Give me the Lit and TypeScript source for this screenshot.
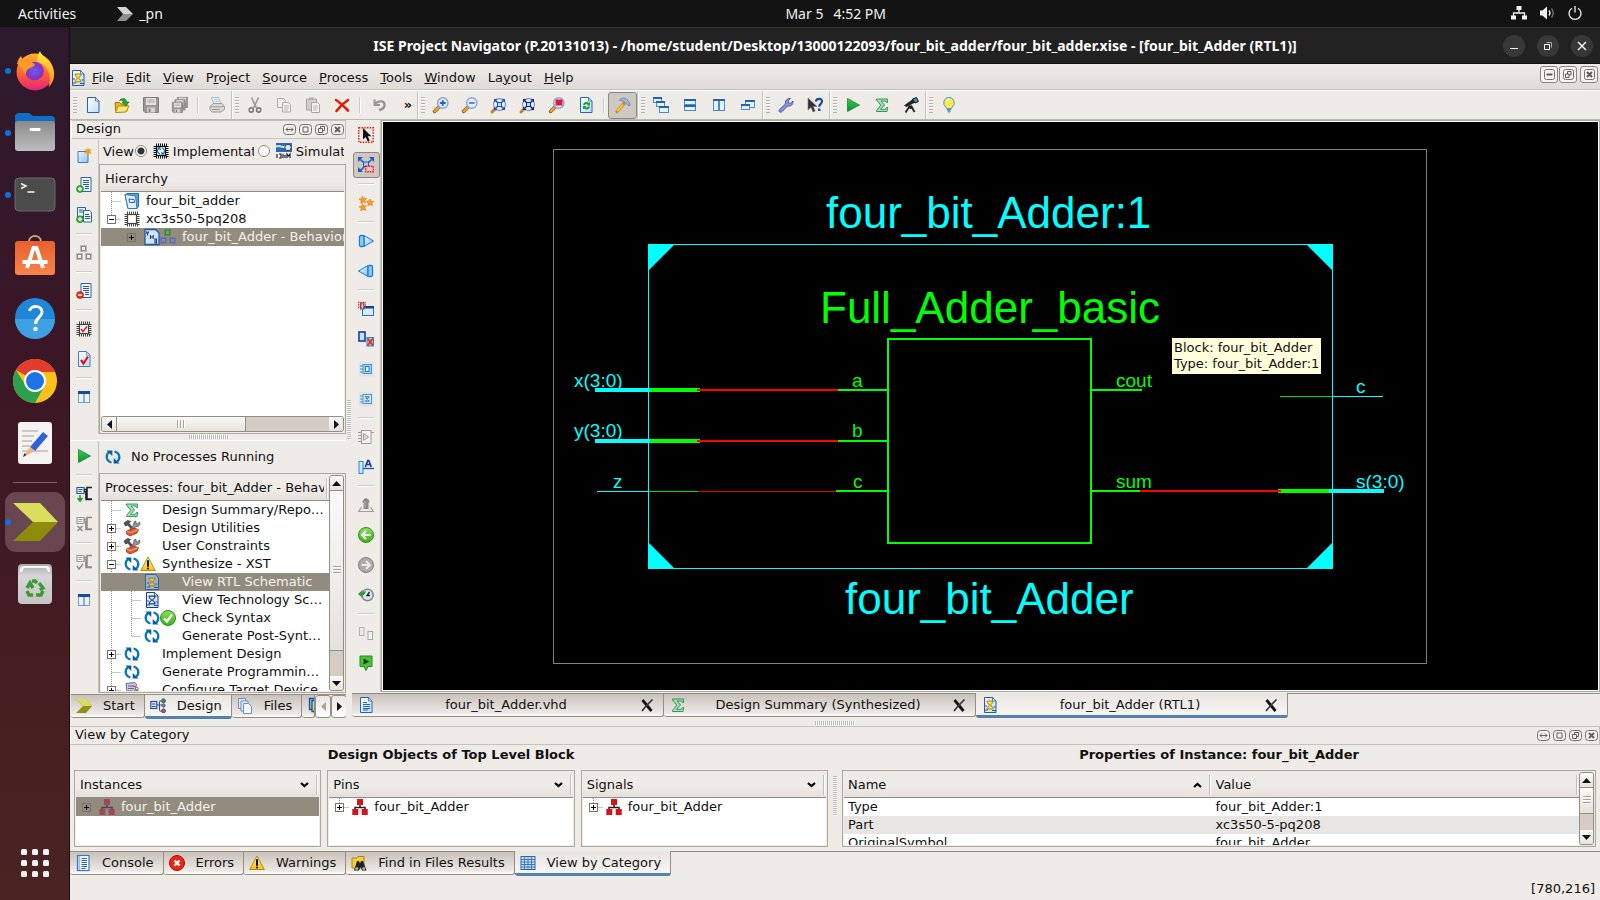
import { LitElement, html, svg, css, nothing } from "lit";
import { customElement, state } from "lit/decorators.js";
import { classMap } from "lit/directives/class-map.js";

type Entry = { icon: string; label: string; on?: boolean } | "sep";

/* Recurring shapes, parameterised where variants share an outline */
const sheet = (body: unknown, stroke = "#2a62b0") => svg`
  <path d="M2.5.5h8l3.5 3.500v11.500h-11.500z" fill="url(#paper)" stroke=${stroke}/>
  <path d="M10.500.5v3.500h3.500z" fill="#fff" stroke=${stroke} stroke-width=".8"/>${body}`;
const lens = (body: unknown) => svg`
  <path d="M1.500 14.500l5-5" stroke="#8a5a20" stroke-width="3.400" stroke-linecap="round"/>
  <path d="M1.700 14.300l4.600-4.600" stroke="#f0a830" stroke-width="2" stroke-linecap="round"/>
  <circle cx="9.800" cy="6" r="5.200" fill="#dcecfb" stroke="#8fa3d8" stroke-width="1.400"/>${body}`;
const lens4 = (c: string) => svg`
  <path d="M1 15l4-4" stroke="#c88020" stroke-width="3" stroke-linecap="round"/>
  <circle cx="8.500" cy="7.500" r="6" fill="#e6f0fc" stroke="#8d9be0" stroke-width="1.300"/>
  <path d="M4.500 3.500l8 8M12.500 3.500l-8 8" stroke=${c} stroke-width="1.500"/>
  <path d="M3 2h3.500L3 5.500zM14 2h-3.500L14 5.500zM14 13h-3.500L14 9.500zM3 13h3.500L3 9.500z" fill=${c}/>
  <rect x="6.500" y="5.500" width="4" height="4" fill="#bcd8f5" stroke=${c}/>`;
const win = (x: number, y: number, w: number, h: number) => svg`
  <rect x=${x + 0.5} y=${y + 0.5} width=${w - 1} height=${h - 1} fill="#e6f3fd" stroke="#4a8ad0"/>
  <rect x=${x} y=${y} width=${w} height="2" fill="#1f62b8"/>`;
const chipDots = (x: number, y: number, c: string) => svg`
  <rect x=${x + 0.5} y=${y + 0.5} width="6" height="6" fill="none" stroke=${c} stroke-dasharray="1 1"/>
  <rect x=${x + 1.5} y=${y + 1.5} width="4" height="4" fill="none" stroke=${c}/>`;
const trio = (a: string, b: string) => svg`${chipDots(4, 0, a)}${chipDots(0, 8, b)}${chipDots(9, 8, b)}`;
const flow = (mark: unknown, c: string) => svg`
  <path d="M1 1.500h7v6h-7zM2.500 3.500h4M2.500 5.500h3" fill="#eef4fb" stroke=${c} stroke-width="1.200"/>
  <path d="M8 3.500h3v-2h5M8 5.500h2v8h6M11 4v9h5" fill="none" stroke=${c === "#1e5aa8" ? "#222" : "#8f8b86"} stroke-width="1.600"/>
  <path d="M9 8.500h2M9 11h2" stroke=${c === "#1e5aa8" ? "#222" : "#8f8b86"}/>${mark}`;
const cycle = svg`
  <path d="M6.500 13.500C.8 12 .5 6 4 3.200" fill="none" stroke="#0a78b8" stroke-width="2.300"/>
  <path d="M1.500 1.500h5.800v5.500z" fill="#0a5fa0"/>
  <path d="M9.500 2.500C15.200 4 15.500 10 12 12.800" fill="none" stroke="#0a78b8" stroke-width="2.300"/>
  <path d="M14.500 14.500H8.700V9z" fill="#0a5fa0"/>`;
const warn = svg`
  <path d="M8 1L15.300 14.500H.7z" fill="url(#amber)" stroke="#b98a10" stroke-linejoin="round"/>
  <path d="M8 5v5" stroke="#111" stroke-width="2" stroke-linecap="round"/><circle cx="8" cy="12.500" r="1.100" fill="#111"/>`;
const sigma = svg`<path d="M2.500 2h11v3.500h-1.200L11.500 4H7l3.500 4L6.500 12.300h5l1-1.800h1.200L13 14.500H2.500v-1L6.800 8.200 2.500 3z" fill="#a8ddb8" stroke="#1e9150" stroke-width=".9"/>`;
const tools = svg`
  <path d="M0 3l3.500-2.500 3 .8-1.500 2 7.500 8.700-1.500 1.500L3.800 5 1.500 6z" fill="#555" stroke="#222" stroke-width=".6"/>
  <path d="M15.500 2l-2 1.800-1.600-.6.1-2.200-2 1.200-.3 2.800L5 11l1.500 1.500 5.500-6 2.500-.3 1.500-2z" fill="#999" stroke="#333" stroke-width=".6"/>
  <path d="M2.500 11l7-3 5 1.500-1.500 3.500-7 3-3.500-2z" fill="#e0582e" stroke="#8a2a12" stroke-width=".7"/><path d="M2.800 11.200l4 1.500 7-3" fill="none" stroke="#f8b090"/>`;
const glass = (c: string, f: string) => svg`<path d="M4.500 4h7M4.500 12h7M5 4.200c0 2.800 2.500 2.800 2.500 3.800S5 9.500 5 11.800h6c0-2.300-2.500-2.800-2.500-3.800S11 7 11 4.200z" fill=${f} stroke=${c} stroke-width="1.100"/><path d="M3 9h2M11.500 10h2M3 13h3M10 13.500h4" stroke="#1e5aa8" stroke-width="1.200"/>`;
const hier = (c: string, l: string) => svg`
  <path d="M8 5v4M3 11v-2.500h10V11" fill="none" stroke=${l} stroke-width="1.500"/>
  <rect x="5" y="0" width="6" height="6" fill=${c}/><rect x=".300" y="10" width="6" height="6" fill=${c}/><rect x="9.700" y="10" width="6" height="6" fill=${c}/>`;
const lines = (c: string) => svg`<path d="M5 5.500h4M5 7.500h7M5 9.500h7M5 11.500h7M5 13h5" stroke=${c} stroke-width="1.100"/>`;
const chip = (c: string, body: unknown) => svg`
  <rect x="3.500" y="3.500" width="9" height="9" fill="#fff" stroke=${c} stroke-width="1.200"/>
  <path d="M3 2h11M3 14h11M2 3v11M14 3v11" stroke=${c} stroke-width="3" stroke-dasharray="1 1"/>${body}`;
const page2 = (c: string, f: string) => svg`
  <path d="M1.500 1.500h6l2 2v7h-8z" fill=${f} stroke=${c}/><path d="M6.500 5.500h6l2 2v7.500h-8z" fill=${f} stroke=${c}/>
  <path d="M8 9h5M8 11h5M8 13h4" stroke=${c} stroke-width=".8"/>`;
const floppy = (x: number, y: number, s: number) => svg`<g transform=${`translate(${x} ${y}) scale(${s})`}>
  <path d="M.500.500h15v15H2l-1.500-1.500z" fill="#9c9893" stroke="#827e79"/><rect x="3" y="1" width="10" height="7" fill="#e6e3df"/>
  <path d="M4.500 3h7M4.500 5h7" stroke="#aaa6a1"/><rect x="4" y="10.500" width="8" height="5" fill="#d8d4cf"/><rect x="5.500" y="11.500" width="2" height="3.500" fill="#827e79"/></g>`;
const disc = (f: string, s: string, body: unknown) => svg`<circle cx="8" cy="8" r="7.500" fill=${f} stroke=${s}/>${body}`;
const chev = svg`<path d="M0 1h10l6 7-6 7H0l7-7z" fill="#929012"/><path d="M0 1h10l6 7H7z" fill="#dbdd58"/>`;

const icons: Record<string, unknown> = {
  newfile: sheet(nothing),
  open: svg`<path d="M1 5.500h4.500l1.500 1.500h6V14l-11 1.500z" fill="#e8b820" stroke="#a07808"/><path d="M1.500 15.500L4 9h11l-3 6z" fill="#fce878" stroke="#b48a10"/><path d="M5.500 3.500c3-3 6.500-2.500 7 1.500h2.500L11.500 9 8 5h2c-.500-2-2.500-2-4.500-1.500z" fill="#2aa838" stroke="#147820" stroke-width=".7"/>`,
  save: floppy(0, 0, 1),
  saveall: svg`${floppy(5, 0, 0.68)}${floppy(2.5, 2.5, 0.68)}${floppy(0, 5, 0.68)}`,
  print: svg`<path d="M2.500.5h7l2.500 7H5z" fill="#f4f8fe" stroke="#9fb8dc"/><path d="M5 2.500h4M5.500 4.500h4" stroke="#a9c0e6"/><path d="M1 9.500l3-3h9l2.500 3v3L12 15H3l-2-2z" fill="#dad7d3" stroke="#a09c98"/><path d="M1 9.800h11l3-.5M3 12.500h8" stroke="#a09c98" fill="none"/>`,
  cut: svg`<path d="M4.500.500L9.500 11M11.500.500L6.500 11" stroke="#9f9b97" stroke-width="1.700"/><circle cx="4.300" cy="13" r="2.100" fill="none" stroke="#7e7a76" stroke-width="1.600"/><circle cx="11.700" cy="13" r="2.100" fill="none" stroke="#7e7a76" stroke-width="1.600"/>`,
  copy: page2("#b0aca8", "#f3f1ee"),
  paste: svg`<path d="M1.500 2h10v11h-10z" fill="#d2cec9" stroke="#a8a49f"/><path d="M4 .500h5v2.500H4z" fill="#b5b1ac"/><path d="M6.500 5.500h6l2 2V15.500h-8z" fill="#f6f4f2" stroke="#a8a49f"/><path d="M8 9h5M8 11h5M8 13h4" stroke="#b9b5b0"/>`,
  del: svg`<path d="M2 3c4 2.500 8 6.500 12 10.500M14 3C9.500 6 5.500 10 2.500 14" stroke="#e81808" stroke-width="2.600" stroke-linecap="round" fill="none"/>`,
  undo: svg`<path d="M3.500 2.500V8h5.500" fill="none" stroke="#99958f" stroke-width="2"/><path d="M3.500 7.500C8 2.500 14 4 13.500 8.500 13 11.500 11 12.500 8 13" fill="none" stroke="#99958f" stroke-width="2.400"/>`,
  zin: lens(svg`<path d="M7 6h5.600M9.800 3.200v5.600" stroke="#2465b8" stroke-width="1.800"/>`),
  zout: lens(svg`<path d="M7 6h5.600" stroke="#4a80c0" stroke-width="1.800"/>`),
  zfull: lens4("#2450a8"),
  zfit: lens4("#0f2d70"),
  zred: lens(svg`<rect x="6.500" y="2.500" width="7" height="6" fill="#e01830"/>`),
  refresh: sheet(svg`<path d="M5 8a3.500 3.500 0 0 1 6-2l1-1v3.500H8.500l1.200-1.200A2 2 0 0 0 7 8zM12 9.500a3.500 3.500 0 0 1-6 2l-1 1V9h3.500l-1.200 1.200A2 2 0 0 0 10 9.500z" fill="#18a030"/>`, "#2468b0"),
  hammer: svg`<path d="M2 14.500L9 6.500" stroke="#c89010" stroke-width="3.200" stroke-linecap="round"/><path d="M2.300 14L8 7.600" stroke="#ffdc50" stroke-width="1.400"/><path d="M4.500 3C7 .500 10.500.5 12 2.500l3.500 5-1.500 1.500-4-3.500L7.500 4z" fill="#a9b2dc" stroke="#6a74a8" stroke-width=".8"/>`,
  cascade: svg`${win(0, 0, 9, 6)}${win(3, 4, 9, 6)}${win(6, 9, 10, 7)}`,
  tileh: svg`${win(2, 2, 12, 6)}${win(2, 8, 12, 6)}`,
  tilev: svg`${win(2, 2, 6, 12)}${win(8, 2, 6, 12)}`,
  restore: svg`${win(5, 3, 10, 8)}${win(1, 7, 9, 6)}`,
  wrench: svg`<path d="M1.200 14.600c-.8-1 0-1.800.8-2.600l5.500-5c-.8-3 1.500-6 5-5.500L10.200 4l.300 2 2 .300L15 4c.500 3.500-2.500 5.800-5.300 5L4.500 14.200c-.9 1-2.200 1.400-3.300.4z" fill="#8a92dc" stroke="#4c509c" stroke-width=".9"/>`,
  whats: svg`<path d="M1 1v12l3-2.800L6 15l2.200-1-2-4.500H10z" fill="#333" stroke="#777" stroke-width=".6"/><path d="M9 4.500C9 1 15 .8 15 4.500c0 2.300-2.800 2.500-2.800 5.300" fill="none" stroke="#14509c" stroke-width="2.200"/><rect x="11" y="11.500" width="2.500" height="2.500" fill="#14509c"/>`,
  play: svg`<path d="M2.500 1.500L14.500 8 2.500 14.500z" fill="url(#leaf)" stroke="#128a30" stroke-width=".8"/>`,
  sigma,
  scope: svg`<path d="M1 8.500L10 2l2 3.500L3.500 10z" fill="#222"/><path d="M9.500 2l4-1.500 2 4-3.500 1.500z" fill="#3a8ec8" stroke="#111"/><path d="M7 8.500l-4.500 7M7.500 8.500V12M8 8.500l3.500 6.500" stroke="#222" stroke-width="1.800"/>`,
  bulb: svg`<path d="M8 .3a5.500 5.500 0 0 1 3.200 9.800c-.6.600-.7 1.200-.7 1.700h-5c0-.5-.1-1.100-.7-1.700A5.500 5.500 0 0 1 8 .3z" fill="#ffe850" stroke="#4a98d0"/><path d="M5.800 3.300c.8-1 2-1 2.500-.8" stroke="#fff" stroke-width="1.400" fill="none"/><path d="M6 12.500h4M6.500 14.200h3M7.500 15.600h1" stroke="#4a88b8" stroke-width="1.300"/>`,
  addnew: svg`<path d="M2 4.500h10V15.500H2z" fill="url(#sky)" stroke="#4b79b8"/><path d="M12 0l1 2.800L16 2l-2 2.500L16 7l-3-.8L12 9l-1-2.800L8 7l2-2.500L8 2l3 .8z" fill="#f59a28"/>`,
  addsrc: svg`<path d="M5 .5h10v14H5z" fill="#f4f9ff" stroke="#2a62b0"/><path d="M7 3.500h6M7 5.500h6M7 7.500h6M9 9.500h4M9 11.500h4" stroke="#1e5aa8" stroke-width="1.200"/><circle cx="4" cy="12" r="3.500" fill="#3db03d" stroke="#1b7a1f" stroke-width=".6"/><path d="M2 12h4M4 10v4" stroke="#fff" stroke-width="1.300"/>`,
  addcopy: svg`<path d="M1.500.5h8v9h-8z" fill="#eaf3fd" stroke="#2a62b0"/><path d="M7.500 3.500h6l2 2v9.500h-8z" fill="#f4f9ff" stroke="#2a62b0"/><path d="M3 3h4M3 5h4M9 7.500h4M9 9.500h5M9 11.500h5" stroke="#1e5aa8"/><circle cx="4" cy="12.200" r="3.500" fill="#3db03d" stroke="#1b7a1f" stroke-width=".6"/><path d="M2 12.200h4M4 10.200v4" stroke="#fff" stroke-width="1.300"/>`,
  triogray: trio("#8d8a86", "#8d8a86"),
  removesrc: svg`<path d="M5 .5h10v14H5z" fill="#f4f9ff" stroke="#2a62b0"/><path d="M7 3.500h6M7 5.500h6M7 7.500h6M9 9.500h4M9 11.500h4" stroke="#1e5aa8" stroke-width="1.200"/><circle cx="4" cy="12" r="3.500" fill="#e83020" stroke="#a01810" stroke-width=".6"/><path d="M2 12h4" stroke="#fff" stroke-width="1.500"/>`,
  chipcheck: chip("#444", svg`<path d="M5 8l2 2.500L11 5.500" fill="none" stroke="#d82030" stroke-width="1.600"/>`),
  pagecheck: sheet(svg`<path d="M5 9l2.500 3.500L12 5.500" fill="none" stroke="#e01020" stroke-width="2.200"/>`, "#4b79b8"),
  panels: svg`<rect x="2.500" y="2.500" width="11" height="11" fill="#eaf3fc" stroke="#7a9cc8"/><rect x="2" y="2" width="12" height="3" fill="#154a9c"/><path d="M8 5v8.500" stroke="#5a88c4" stroke-width="1.300"/>`,
  flowrun: flow(svg`<path d="M4 9v5M1.500 12l2.500 3 2.500-3" fill="none" stroke="#16962c" stroke-width="1.500"/>`, "#1e5aa8"),
  flowstop: flow(svg`<path d="M1.500 10l5 5M6.500 10l-5 5" stroke="#8f8b86" stroke-width="1.500"/>`, "#a09c97"),
  flowok: flow(svg`<path d="M1 12l2 3 4-5" fill="none" stroke="#8f8b86" stroke-width="1.500"/>`, "#a09c97"),
  select: svg`<rect x=".800" y=".800" width="14.400" height="14.400" fill="none" stroke="#f01010" stroke-width="1.400" stroke-dasharray="1.500 1.200"/><path d="M5 1v11.500l2.700-2.500 2 4.500 2-.9-2-4.400h3.600z" fill="#111"/>`,
  expand: svg`<path d="M2.500 2.500l11 11M13.500 2.500l-11 11" stroke="#2060b8" stroke-width="1.600"/><path d="M0 0h5L0 5zM16 0h-5l5 5zM0 15h5l-5-5z" fill="#1c5cb8"/><rect x="5.500" y="5" width="5" height="4.500" fill="#a8d0f4" stroke="#2060b8"/><rect x="7.800" y="9.300" width="7.500" height="5.500" fill="#f0c8c8" stroke="#f01010" stroke-width="1.400" stroke-dasharray="1.500 1"/>`,
  stars: svg`<path d="M4.500 1l1.200 2.500 2.800-.2-1.700 2 1 2.500-2.600-.9-2.300 1.500.2-2.700L1 4.200l2.700-.6zM12 4l1 2.300 2.800.1-2 1.700.7 2.600-2.400-1.200-2.300 1.200.6-2.500-2-1.800 2.700-.3zM4.500 8.500l1.200 2.500 2.800-.2-1.700 2 1 2.500-2.600-.9-2.300 1.500.2-2.700L1 11.700l2.700-.6z" fill="#f8a028" stroke="#e07010" stroke-width=".6"/>`,
  goright: svg`<path d="M6 2.500L15.500 8 6 13.500z" fill="url(#sky)" stroke="#1a78d8"/><rect x="1.500" y="2.500" width="4.500" height="11" rx="1.500" fill="#8cd0fc" stroke="#1a78d8" stroke-width="1.300"/>`,
  goleft: svg`<path d="M10 2.500L.5 8l9.500 5.500z" fill="url(#sky)" stroke="#1a78d8"/><rect x="10" y="2.500" width="4.500" height="11" rx="1.500" fill="#8cd0fc" stroke="#1a78d8" stroke-width="1.300"/>`,
  addwin: svg`<rect x="4.500" y="5.500" width="11" height="9" fill="#d8edfc" stroke="#3a70b8"/><rect x="4" y="5" width="12" height="2.500" fill="#183f90"/><rect x="2.500" y="2" width="3.500" height="6" fill="#bde0fa" stroke="#1e5aa8"/><path d="M0 1.500h8M0 4h8M0 6.500h8" stroke="#f03018" stroke-width="1.400" stroke-dasharray="1.400 1"/>`,
  delwin: svg`<rect x="1" y="1" width="6" height="9" fill="#bfe4fb" stroke="#153f94" stroke-width="1.600"/><rect x="9" y="6.500" width="6.500" height="8.500" fill="#9cc4ec" stroke="#3a80c8"/><path d="M9.500 7.500l5.500 7M15 7.500l-5.500 7" stroke="#f03010" stroke-width="1.800"/>`,
  push: svg`<rect x="1" y="1" width="14.500" height="14.500" fill="#dfe3e6"/><path d="M2 5h4M2 8h4M2 11h4" stroke="#4f90c8" stroke-width="1.200"/><rect x="5" y="3.500" width="8.500" height="9" fill="#9fd0ee" stroke="#4a9ad0"/><rect x="7.500" y="5.500" width="3.500" height="5" fill="#e4f4fc" stroke="#2a80c0"/>`,
  pop: svg`<rect x="1" y="1" width="14.500" height="14.500" fill="#dfe3e6"/><path d="M2 5h4M2 8h4M2 11h4" stroke="#4f90c8" stroke-width="1.200"/><rect x="5" y="3.500" width="8.500" height="9" fill="#cfe8f6" stroke="#4a9ad0"/><path d="M7.500 6l3.500 4M11 6l-3.500 4M7 5.800h4.500M7 10.200h4.500" stroke="#4a78b0" stroke-width="1.100"/>`,
  gate: svg`<path d="M0 3.500h4M0 6.500h4M0 9.500h4M0 12.500h4M13 3.500h3" stroke="#a09c97" stroke-width="1.200"/><rect x="3.500" y="1.500" width="9.500" height="13" fill="#f5f3f0" stroke="#a09c97"/><path d="M5.500 4.500v7l5-3.500z" fill="#e0ddd9" stroke="#a09c97"/>`,
  label: svg`<rect x="1" y="2.500" width="4" height="12" fill="#c8e8fc" stroke="#2a88d8"/><path d="M5 9.500h11" stroke="#1a60b8" stroke-width="1.400"/><path d="M7.300 8l2.500-6.500h1L13.300 8M8.500 5.500h4" fill="none" stroke="#1c3f94" stroke-width="1.700"/>`,
  up: svg`<path d="M3.500 10L.8 14.500h14.400L12.500 10" fill="none" stroke="#a09c97" stroke-width="1.200"/><path d="M8 1c3 1 3.500 3 3.500 4.500H10.500V12h-5V5.500h-1C4.500 4 5 2 8 1z" fill="#8b8783"/><path d="M7 4v7" stroke="#b9b5b0"/>`,
  back: disc("url(#green)", "#2d9016", svg`<path d="M12.500 8H4M8 4L4 8l4 4" fill="none" stroke="#fff" stroke-width="2"/>`),
  fwd: disc("#aeaaa6", "#84807c", svg`<path d="M3.500 8H12M8 4l4 4-4 4" fill="none" stroke="#efedea" stroke-width="1.800"/>`),
  hist: svg`<circle cx="9.500" cy="8" r="5.700" fill="#d9e6ec" stroke="#7f8a8c" stroke-width="1.600"/><path d="M11.500 5L9 8.500h3" stroke="#223" stroke-width="1.300" fill="none"/><path d="M0 7l4.500-4v2.500C6 5 7 4.500 8 3.500 7.500 6.500 6.500 8 4.500 8.500V11z" fill="#2e9a38"/>`,
  two: svg`<rect x="1.500" y="2.500" width="4.500" height="8" fill="#eceae7" stroke="#b5b1ac"/><rect x="10" y="6.500" width="4.500" height="8" fill="#f4f2f0" stroke="#aaa6a1"/>`,
  runflag: svg`<path d="M2 1h12v10.500h-4L8 15.500 6 11.500H2z" fill="#4cc03a" stroke="#248a18"/><path d="M5.500 3.500L11.500 6.500 5.500 9.500z" fill="#154010"/>`,
  proj: svg`<path d="M1 1.500l3-1h10.500v13L13 15.500H4z" fill="#5aa4dc" stroke="#1c6cb8"/><path d="M1 1.500L11.500 3 13 15.500H4z" fill="#e2f1fc" stroke="#2c7cc4"/><path d="M5 6l5 .5.5 3-5-.2z" fill="#fff" stroke="#2458a8"/>`,
  chip: chip("#444", nothing),
  impl: chip("#111", svg`<g transform="translate(3.500 3.500) scale(.56)">${cycle}</g>`),
  simul: svg`<rect width="16" height="9" fill="#2a6ab0"/><path d="M0 4c3-3 6 2 10-1" stroke="#cfe6fa" stroke-width="2" fill="none"/><circle cx="12" cy="4.500" r="3.200" fill="#dfe8f0" stroke="#345"/><path d="M0 10h16v6H0z" fill="#eee"/><path d="M1 11v4M3 11h2v4H3M7 15v-4M9 15v-3M11 15v-4l1.500 2 1.500-2v4" stroke="#222" stroke-width="1.200" fill="none"/>`,
  vhd: svg`<path d="M1 .5h10.500L15 4v11.500H1z" fill="#cfe4f8" stroke="#1f58a8" stroke-width="1.300"/><path d="M2.500 2.500l1 3 1-3M6.500 6v4M9.300 6v4M6.500 8h2.800M11 10v4h1.500v-4z" fill="none" stroke="#223a70" stroke-width="1.100"/>`,
  trio: trio("#1c9838", "#5a6cc0"),
  cycle, warn, tools,
  ok: disc("url(#green)", "#2a9018", svg`<path d="M4 8.500l3 3L12 4.500" fill="none" stroke="#fff" stroke-width="2.200"/>`),
  rtl: sheet(glass("#b8941c", "#ffe070"), "#1f5cb0"),
  rtlsel: svg`<path d="M1.500.5h10l3 3.500v11.500h-13z" fill="#9fb3c4" stroke="#35609c"/>${glass("#a5893a", "#dcc878")}`,
  tech: sheet(glass("#173a88", "#dfeaf8"), "#173f90"),
  config: svg`<path d="M2 1.500l9-1 1.500 2L10 12 3.500 14z" fill="#c4cae0" stroke="#666c90"/><path d="M4 4h6M4 6.500h6M4 9h5" stroke="#667"/><path d="M12.500 15V9M10 11.500l2.500-3 2.500 3" fill="none" stroke="#189030" stroke-width="1.800"/><path d="M9 4l5 2v3" stroke="#d83080" fill="none"/>`,
  start: chev,
  design: svg`<rect x=".8" y="3.500" width="6" height="7" fill="#dceafa" stroke="#254f9c" stroke-width="1.200"/><path d="M2 6h3.500M2 8.500h3.500M7 7h5M9.500 3.500v9M9.500 3h3M9.500 13h3" stroke="#254f9c" fill="none"/><circle cx="13.500" cy="2.800" r="1.900" fill="#38a048" stroke="#446"/><circle cx="13.500" cy="7.500" r="1.600" fill="#7a88cc" stroke="#446"/><circle cx="13.500" cy="12.800" r="1.900" fill="#d85070" stroke="#446"/>`,
  files: svg`<path d="M1.500.5h7v10h-7z" fill="#dfeaf8" stroke="#6a8cc0"/><path d="M4 3h7v10H4z" fill="#e8f1fb" stroke="#6a8cc0"/><path d="M6.500 5.500h5l3 3v7h-8z" fill="#f4f9ff" stroke="#6a8cc0"/>`,
  libs: svg`<path d="M2.500.5h9v11h-9z" fill="#8cc4f0" stroke="#154f98" stroke-width="1.300"/><path d="M5 2.500h9v11h-9z" fill="#ffe070" stroke="#154f98" stroke-width="1.300"/><path d="M7.500 4.500h8v11h-8z" fill="#60a8e8" stroke="#154f98" stroke-width="1.300"/>`,
  doc: sheet(lines("#1e66c0")),
  console: svg`<rect x="2.500" y=".5" width="11.500" height="15" fill="#fff" stroke="#3a78c0" stroke-width="1.200"/><path d="M4.300 1v14" stroke="#9cc4ea" stroke-width="2"/><path d="M6.500 3.500h5.500M6.500 5.500h5.500M6.500 7.500h5.500M6.500 9.500h5.500M6.500 11.500h5.500M6.500 13.500h4" stroke="#2464b4" stroke-width="1.100"/>`,
  err: disc("#ee2414", "#a81008", svg`<path d="M5.500 5.500l5 5M10.500 5.500l-5 5" stroke="#fff" stroke-width="2.400"/>`),
  find: svg`<path d="M1 3h5l1-1.500h6V13H1z" fill="#f4d040" stroke="#a88410"/><path d="M3 15.500l3-9.500h2l1 2.500L10 6h2l3.500 9.500H11L9.500 12 8 15.500z" fill="#222"/><circle cx="5.800" cy="13.500" r="1.600" fill="#aaa"/><circle cx="12.700" cy="13.500" r="1.600" fill="#aaa"/>`,
  grid: svg`<rect x="1" y="1.500" width="14" height="13" fill="#cfe2f8" stroke="#2a64b0"/><path d="M1 4.500h14M1 7h14M1 9.500h14M1 12h14M4.500 1.500v13M8 1.500v13M11.500 1.500v13" stroke="#3a74c0"/>`,
  hier: hier("#dc1018", "#222"),
  hiersel: hier("#a04858", "#44484c"),
};

const dockIcons: Record<string, unknown> = {
  firefox: svg`<circle cx="20" cy="21" r="18.500" fill="url(#fox)"/><path d="M25 0c1 5 10 8 13.500 18 2 8-1 15-5 18C38 24 31 12 22 11c0-4 1-8 3-11z" fill="url(#foxy)"/><circle cx="19.500" cy="20" r="9.300" fill="url(#foxp)"/><path d="M2 13C3 9 4 7 6 5c1 3 3 4 6 4.500 3 .3 5 2.500 8 3.500-1 3-4 3.500-6 4.500-2.500 1-3 4-3.500 6C7 20 7 15 2 13z" fill="#ff9a28"/>`,
  files: svg`<path d="M0 4q0-4 4-4h10l4 3h18q4 0 4 4v20H0z" fill="#0f6fc8"/><rect x="0" y="8" width="40" height="30" rx="3" fill="url(#steel)"/><rect x="14.500" y="15" width="11" height="3" rx="1" fill="#fff"/>`,
  term: svg`<rect x="0" y="3" width="40" height="33" rx="4" fill="#4b4c4b" stroke="#6b6b6b"/><path d="M6 8.500l5 2.500-5 2.500" fill="none" stroke="#eee" stroke-width="1.600"/><path d="M12.500 17h7" stroke="#eee" stroke-width="1.600"/>`,
  store: svg`<path d="M14 5c0-8 12-8 12 0" fill="none" stroke="#c9a088" stroke-width="2"/><rect y="4" width="40" height="34" rx="3" fill="url(#orange)"/><path d="M12 31L18.500 11h3L28 31" fill="none" stroke="#fff" stroke-width="4"/><path d="M7.500 25h25" stroke="#fff" stroke-width="4"/>`,
  help: svg`<circle cx="20" cy="19" r="20" fill="#1f86d8"/><path d="M0 20a20 20 0 0 0 40 0z" fill="#3fa0e4"/><path d="M14.500 12c1-6 13-6 12.500 1 0 5-6.500 6-6.500 12" fill="none" stroke="#fff" stroke-width="3"/><circle cx="20.500" cy="30" r="2.200" fill="#fff"/>`,
  chrome: svg`<circle cx="20" cy="20" r="22" fill="#fcc21b"/><path d="M20 20L1 9A22 22 0 0 1 39 9H20z" fill="#e33b2e"/><path d="M1 9A22 22 0 0 0 20 42l9.500-17L11 25z" fill="#2da04e"/><path d="M20 9h19.500v2H20z" fill="#e33b2e"/><circle cx="20" cy="20" r="11" fill="#fff"/><circle cx="20" cy="20" r="9" fill="#1f73e8"/>`,
  gedit: svg`<rect x="3" y="-1" width="34" height="42" rx="3" fill="#f4f3f1"/><path d="M7 8h16M7 13h12M7 18h10M7 23h8M7 28h26" stroke="#c2bcae" stroke-width="1.500"/><path d="M15 24L28 9l5 4-13 15z" fill="#2f62d8"/><path d="M15 24l5 4-12 6z" fill="#f0b47c"/><path d="M8 34l1.500-4 2 2z" fill="#333"/>`,
  ise: svg`<path d="M-2 1h27l18 19H18z" fill="#dbdd5c"/><path d="M-2 39h27l18-19H18z" fill="#8e8c08"/>`,
  trash: svg`<rect x="3" y="0" width="34" height="40" rx="4" fill="url(#bin)"/><path d="M5 6q0-4 3-4h24q3 0 3 4v2h-2L31 4H9L7 8H5z" fill="#f6f6f6"/><path d="M12 24l3-5 3 5M22 19l-2-2h-3M24 19l4 5-3 2M28 27l-2 4h-5M18 31h-4l-2-4" fill="none" stroke="#3a9a34" stroke-width="3.500"/>`,
  apps: svg`${[6, 17, 28].map((y) => [6, 17, 28].map((x) => svg`<rect x=${x} y=${y} width="6" height="6" rx="1.500" fill="#f4f2f2"/>`))}`,
};

const pic = (name: string) => html`<svg class="ic" viewBox="0 0 16 16" aria-hidden="true">${icons[name]}</svg>`;

const b = (icon: string, label: string, on = false): Entry => ({ icon, label, on });
const mainBar: { items: Entry[]; more?: boolean }[] = [
  { items: [b("newfile", "New"), b("open", "Open"), b("save", "Save"), b("saveall", "Save All"), "sep", b("print", "Print")] },
  { items: [b("cut", "Cut"), b("copy", "Copy"), b("paste", "Paste"), b("del", "Delete"), "sep", b("undo", "Undo")], more: true },
  { items: [b("zin", "Zoom In"), b("zout", "Zoom Out"), b("zfull", "Zoom to Full View"), b("zfit", "Zoom to Selected"), b("zred", "Zoom to Box"), b("refresh", "Refresh"), "sep", b("hammer", "Toggle Tools", true)] },
  { items: [b("cascade", "Cascade"), b("tileh", "Tile Horizontally"), b("tilev", "Tile Vertically"), b("restore", "Float")] },
  { items: [b("wrench", "Preferences"), b("whats", "What's This")] },
  { items: [b("play", "Implement Top Module"), b("sigma", "Design Summary"), b("scope", "Analyze Design")] },
  { items: [b("bulb", "Tip of the Day")] },
];
const designBar: Entry[] = [b("addnew", "New Source"), b("addsrc", "Add Source"), b("addcopy", "Add Copy of Source"), "sep", b("triogray", "Manual Compile Order"), "sep", b("removesrc", "Remove"), "sep", b("chipcheck", "Design Properties"), b("pagecheck", "Check"), "sep", b("panels", "Split View")];
const processBar: Entry[] = [b("play", "Run"), "sep", b("flowrun", "Rerun All"), b("flowstop", "Stop"), "sep", b("flowok", "Force Up-to-Date"), "sep", b("panels", "Split View")];
const schematicBar: Entry[] = [b("select", "Select"), b("expand", "Select Area", true), "sep", b("stars", "Highlight"), "sep", b("goright", "Trace Forward"), b("goleft", "Trace Back"), "sep", b("addwin", "Add to View"), b("delwin", "Remove from View"), b("push", "Push"), b("pop", "Pop"), "sep", b("gate", "Show Gate"), b("label", "Rename"), "sep", b("up", "Up"), b("back", "Back"), b("fwd", "Forward"), b("hist", "History"), "sep", b("two", "Compare"), b("runflag", "Run")];

const menus: [string, string, string][] = [["", "F", "ile"], ["", "E", "dit"], ["", "V", "iew"], ["P", "r", "oject"], ["", "S", "ource"], ["", "P", "rocess"], ["", "T", "ools"], ["", "W", "indow"], ["La", "y", "out"], ["", "H", "elp"]];

type Node = { text: string; icons: string[]; level: number; box?: "+" | "-"; selected?: boolean };
const sources: Node[] = [
  { text: "four_bit_adder", icons: ["proj"], level: 0 },
  { text: "xc3s50-5pq208", icons: ["chip"], level: 0, box: "-" },
  { text: "four_bit_Adder - Behavioral", icons: ["vhd", "trio"], level: 1, box: "+", selected: true },
];
const processes: Node[] = [
  { text: "Design Summary/Repo…", icons: ["sigma"], level: 0 },
  { text: "Design Utilities", icons: ["tools"], level: 0, box: "+" },
  { text: "User Constraints", icons: ["tools"], level: 0, box: "+" },
  { text: "Synthesize - XST", icons: ["cycle", "warn"], level: 0, box: "-" },
  { text: "View RTL Schematic", icons: ["rtlsel"], level: 1, selected: true },
  { text: "View Technology Sc…", icons: ["tech"], level: 1 },
  { text: "Check Syntax", icons: ["cycle", "ok"], level: 1 },
  { text: "Generate Post-Synt…", icons: ["cycle"], level: 1 },
  { text: "Implement Design", icons: ["cycle"], level: 0, box: "+" },
  { text: "Generate Programmin…", icons: ["cycle"], level: 0 },
  { text: "Configure Target Device", icons: ["config"], level: 0, box: "+" },
];

@customElement("app-root")
export class AppRoot extends LitElement {
  @state() private bottomTab = "View by Category";

  static styles = css`
    :host { display: grid; grid-template-rows: 27px minmax(0, 1fr); grid-template-columns: 70px minmax(0, 1fr); height: 100vh; min-height: 720px; background: #efebe7; color: #111; font: 13px/18px "DejaVu Sans", sans-serif; overflow: hidden; }
    * { box-sizing: border-box; }
    button { font: inherit; color: inherit; background: none; border: 0; padding: 0; margin: 0; }
    .defs { position: absolute; width: 0; height: 0; }
    .ic { width: 16px; height: 16px; flex: none; display: block; overflow: visible; }
    .topbar { grid-column: 1 / 3; background: #131313; color: #f0f0f0; display: grid; grid-template-columns: minmax(0, 1fr) auto calc(50% - 86px); align-items: center; font: 14px/26px "Noto Sans", sans-serif; }
    .top-left { display: flex; align-items: center; padding-left: 18px; gap: 41px; }
    .top-app { display: flex; align-items: center; gap: 6px; }
    .top-icons { display: flex; justify-content: flex-end; align-items: center; gap: 12px; padding-right: 17px; }
    .clock { display: flex; gap: 10px; }
    .dock { background: linear-gradient(#2c1a2d, #3a1626 35%, #451e21 75%, #4a2423); border-right: 1px solid #1a0e14; padding-top: 13px; display: flex; flex-direction: column; align-items: center; }
    .dock-item { width: 60px; height: 60px; margin: 1px 0; flex: none; position: relative; display: grid; place-items: center; border-radius: 11px; }
    .dock-item svg { width: 40px; height: 40px; overflow: visible; display: block; }
    .dock-item.current { background: #6a4651; }
    .running::before { content: ""; position: absolute; left: 0; top: 27px; width: 6px; height: 6px; border-radius: 50%; background: #0b74dc; }
    .dock-line { width: 44px; height: 17px; display: flex; align-items: center; flex: none; }
    .dock-line::before { content: ""; flex: 1; height: 1px; background: #80606a; }
    .dock-apps { margin-top: auto; margin-bottom: 7px; }
    .window { display: flex; flex-direction: column; min-width: 0; min-height: 0; }
    .titlebar { height: 37px; flex: none; background: #222; border-top: 1px solid #333; border-bottom: 1px solid #111; color: #fff; display: grid; grid-template-columns: 110px minmax(0, 1fr) 110px; align-items: center; font: bold 14px/34px "Noto Sans", sans-serif; }
    .titlebar h1 { font: inherit; margin: 0; grid-column: 2; text-align: center; white-space: nowrap; }
    .win-btns { display: flex; gap: 12px; justify-content: flex-end; padding-right: 7px; }
    .win-btns button { width: 22px; height: 22px; border-radius: 50%; background: #383838; display: grid; place-items: center; }
    .win-btns svg { width: 12px; height: 12px; }
    .menubar { height: 26px; flex: none; display: flex; align-items: center; background: linear-gradient(#efece8, #dfdbd7); border-bottom: 1px solid #c6c1bb; padding-top: 2px; }
    .menubar > button { padding: 0 6px; }
    .mdi { margin-left: auto; display: flex; gap: 1px; align-self: flex-start; padding-right: 2px; }
    .mdi button { width: 18px; height: 17px; border: 1px solid #8d867e; border-radius: 3px; background: #f6f4f2; display: grid; place-items: center; }
    .mdi button:last-child { margin-left: 2px; }
    .mdi svg, .tiny svg { width: 13px; height: 13px; display: block; }
    .toolbar { height: 30px; flex: none; display: flex; border-top: 1px solid #fff; border-bottom: 1px solid #bbb6b0; }
    .group { display: flex; align-items: center; border-right: 1px solid #c6c1bb; box-shadow: 1px 0 #fff; padding-left: 3px; }
    .group:last-child { border: 0; box-shadow: none; }
    .grip { width: 4px; height: 16px; margin-right: 1px; background: repeating-linear-gradient(#b7b2ac 0 1px, #fbfaf9 1px 2px, #efebe7 2px 3px); }
    .tool { display: grid; place-items: center; width: 29px; height: 27px; border: 1px solid transparent; border-radius: 3px; flex: none; }
    .tool.on { background: #cec8c2; border-color: #8c867f; }
    .sep { width: 8px; height: 16px; display: flex; justify-content: center; flex: none; }
    .sep::before { content: ""; border-left: 1px solid #d0cbc6; border-right: 1px solid #fff; }
    .more { font-weight: bold; width: 18px; margin-left: 6px; text-align: center; }
    .vbar { display: flex; flex-direction: column; align-items: center; overflow: hidden; border-right: 1px solid #c6c1bb; }
    .left .vbar { padding-right: 2px; }
    .left .vbar .tool { width: 25px; }
    .vbar .tool { width: 27px; height: 26px; margin: 2px 0; }
    .vbar .sep { width: 16px; height: 8px; flex-direction: column; }
    .vbar .sep::before { border: 0; border-top: 1px solid #d0cbc6; border-bottom: 1px solid #fff; }
    .main { flex: 1; min-height: 0; display: grid; grid-template-columns: 276px 6px minmax(0, 1fr); }
    .left { display: flex; flex-direction: column; min-height: 0; min-width: 0; padding-left: 1px; }
    .panel-title { height: 19px; flex: none; display: flex; align-items: center; justify-content: space-between; border: 1px solid #c6c1bb; border-left-color: #fff; padding: 0 1px 0 4px; }
    .panel-title h2 { font: inherit; line-height: 15px; height: 17px; margin: 0; }
    .tiny { display: flex; gap: 3px; }
    .pane { display: grid; grid-template-columns: 28px minmax(0, 1fr); min-height: 0; }
    .pane.upper { flex: 7 1 0; margin-top: 1px; }
    .pane.lower { flex: 6 1 0; border-top: 1px solid #fff; }
    .pane-body { display: flex; flex-direction: column; min-height: 0; min-width: 0; }
    .view-row { height: 24px; flex: none; display: flex; align-items: center; padding: 0 2px 2px 4px; line-height: 17px; white-space: nowrap; overflow: hidden; }
    .view-row fieldset { display: contents; }
    .view-row label { display: flex; gap: 4px; align-items: center; min-width: 0; overflow: hidden; }
    .view-row label .ic { margin-left: 2px; }
    .impl { width: 120px; padding-left: 1px; flex: none; }
    .simu { flex: 1; margin-left: 4px; }
    input[type="radio"] { appearance: none; width: 12px; height: 12px; margin: 0; border: 1px solid #8d867e; border-radius: 50%; background: #fff; flex: none; }
    input[type="radio"]:checked { background: radial-gradient(#333 0 3px, #fff 4px); }
    .frame { border: 1px solid #aca7a0; padding: 1px; background: #efebe7; min-height: 0; flex: 1; display: flex; }
    .frame-col { flex: 1; min-width: 0; display: flex; flex-direction: column; }
    .head { height: 26px; flex: none; display: flex; align-items: center; justify-content: space-between; padding: 0 1px 0 4px; background: linear-gradient(#efebe7 60%, #e4dfda); border-bottom: 1px solid #958d83; white-space: nowrap; overflow: hidden; text-align: left; width: 100%; }
    .head::after { content: ""; height: 20px; border-left: 1px solid #c4beb7; border-right: 1px solid #fff; margin-left: 7px; }
    .head.tight::after { margin-left: 2px; }
    .head.plain::after { display: none; }
    .head span { overflow: hidden; flex: 1; }
    .head svg { width: 9px; height: 6px; flex: none; }
    .tree { flex: 1; min-height: 0; overflow: hidden; background: #fff; margin: 0; padding: 0; list-style: none; }
    .tree li { display: flex; height: 18px; align-items: center; white-space: nowrap; overflow: hidden; }
    .tree li.selected { background: #928c7e; color: #f4f2ee; }
    .lane { width: 20px; height: 18px; flex: none; position: relative; }
    .lane svg { display: block; width: 20px; height: 18px; }
    .icons { display: flex; flex: none; height: 16px; width: 22px; margin-left: 3px; }
    .icons.wide { width: 38px; }
    .hscroll { height: 16px; flex: none; display: flex; border: 1px solid #958d83; border-radius: 3px; background: #d5cdc5; overflow: hidden; }
    .vscroll { width: 15px; flex: none; display: flex; flex-direction: column; border: 1px solid #958d83; border-radius: 3px; background: #d5cdc5; overflow: hidden; }
    .hscroll button, .vscroll button, .thumb { background: linear-gradient(#fbfaf8, #e6e2dd); flex: none; display: grid; place-items: center; }
    .hscroll svg, .vscroll svg { width: 9px; height: 9px; }
    .hscroll button { width: 14px; }
    .vscroll button { height: 14px; }
    .hscroll .thumb { flex: 0 0 54%; border: solid #958d83; border-width: 0 1px; }
    .vscroll .thumb { border: solid #958d83; border-width: 1px 0; }
    .thumb::before { content: ""; width: 8px; height: 8px; }
    .hscroll .thumb::before { background: repeating-linear-gradient(90deg, #a9a39b 0 1px, #fff 1px 2px, transparent 2px 3px); }
    .vscroll .thumb::before { background: repeating-linear-gradient(#a9a39b 0 1px, #fff 1px 2px, transparent 2px 3px); }
    .track-end { flex: 1; }
    .hsplit { height: 7px; flex: none; display: flex; justify-content: center; align-items: center; }
    .left .hsplit { height: 6px; }
    .hsplit::before { content: ""; width: 40px; height: 4px; background: repeating-linear-gradient(90deg, #bdb8b2 0 1px, #fff 1px 2px); }
    .vsplit { display: flex; justify-content: center; align-items: center; }
    .vsplit::before { content: ""; height: 40px; width: 4px; background: repeating-linear-gradient(#bdb8b2 0 1px, #fff 1px 2px); }
    .status-row { height: 32px; flex: none; display: flex; align-items: center; gap: 10px; padding: 0 0 1px 6px; }
    .tabs { height: 25px; flex: none; display: flex; align-items: flex-start; border-top: 1px solid #958d83; margin-top: 1px; }
    .main .tabs { height: 26px; }
    .main .left-tabs { height: 25px; overflow: hidden; }
    .tab { display: flex; align-items: center; gap: 11px; height: 23px; padding: 0 9px 0 5px; border-right: 1px solid #958d83; border-bottom: 1px solid #958d83; border-bottom-right-radius: 3px; border-bottom-left-radius: 3px; background: linear-gradient(#c9c2bb, #ece8e4 85%, #fff); white-space: nowrap; flex: none; }
    .tab.active { height: 25px; background: linear-gradient(#e9e5e1, #f7f5f2); border-bottom: 3px solid #5382ad; margin-top: -1px; padding-top: 2px; }
    .tab.cut { width: 13px; overflow: hidden; padding-right: 0; }
    .arrow { width: 16px; height: 23px; border: 1px solid #958d83; border-radius: 3px; background: linear-gradient(#e9e5e1, #fff); display: grid; place-items: center; flex: none; }
    .arrow svg { width: 9px; height: 11px; }
    .tab.doc-tab { width: 312px; padding-left: 6px; padding-right: 7px; gap: 0; }
    .doc-tab span { flex: 1; text-align: center; }
    .doc-tab .ic:last-child { width: 18px; }
    .right { display: flex; flex-direction: column; min-width: 0; min-height: 0; }
    .work { flex: 1; min-height: 0; display: grid; grid-template-columns: 29px minmax(0, 1fr); }
    .sheet { position: relative; border: 1px solid #aca7a0; padding: 1px; background: #fff; min-height: 0; min-width: 0; }
    .sheet > svg { display: block; width: 100%; height: 100%; background: #000; }
    .sheet text { font-family: "Liberation Sans", Arial, sans-serif; }
    .big { font-size: 44px; }
    .pin { font-size: 19px; }
    .tip { position: absolute; left: 790px; top: 217px; background: #ffffdc; color: #111; padding: 2px; line-height: 16px; height: 36px; white-space: nowrap; }
    .bottom { flex: none; display: grid; grid-template-columns: minmax(0, 1fr) 14px minmax(0, 1fr); height: 105px; padding: 0 4px 3px; }
    .bottom h3 { font: bold 13px/20px "DejaVu Sans", sans-serif; text-align: center; margin: 0; height: 25px; flex: none; }
    .side { display: flex; flex-direction: column; min-height: 0; }
    .trio { display: flex; gap: 6px; flex: 1; min-height: 0; }
    table { border-collapse: collapse; width: 100%; table-layout: fixed; }
    .table-box { flex: 1; min-width: 0; overflow: hidden; background: #fff; }
    th { font-weight: normal; padding: 0; height: 26px; }
    th:first-child { width: 50%; }
    td { padding: 0 0 0 4px; height: 18px; }
    tbody tr:nth-child(2) { background: #e8e6e2; }
    .statusbar { height: 24px; flex: none; text-align: right; padding: 4px 5px 0; }
  `;

  private buttons(items: Entry[]) {
    return items.map((it) => it === "sep" ? html`<span class="sep"></span>`
      : html`<button class=${classMap({ tool: true, on: !!it.on })} aria-label=${it.label} title=${it.label}>${pic(it.icon)}</button>`);
  }

  private rows(list: Node[], slot: boolean) {
    return list.map((n, i) => {
      const next = list.slice(i + 1);
      const more = n.level === 1 && next.length > 0 && next[0].level === 1;
      const outer = next.some((x) => x.level === 0);
      const lane = (through: boolean, box?: string, stub = true) => html`<span class="lane"><svg viewBox="0 0 20 18" aria-hidden="true">
        <path d=${`M10.500 0V${through ? 18 : 9}${stub ? "M10.500 9.500H20" : ""}`} fill="none" stroke="#8d8d8d" stroke-dasharray="1 1"/>
        ${box ? svg`<rect x="6.500" y="5.500" width="8" height="8" fill=${n.selected ? "#928c7e" : "#fff"} stroke="#77736c"/><path d=${`M8 9.500h5${box === "+" ? "M10.500 7v5" : ""}`} stroke="#000"/>` : nothing}</svg></span>`;
      return html`<li class=${classMap({ selected: !!n.selected })}>
        ${n.level === 1 ? (outer ? lane(true, undefined, false) : html`<span class="lane"></span>`) : nothing}
        ${lane(n.level === 0 ? outer : more, n.box)}
        <span class=${classMap({ icons: true, wide: slot || n.icons.length > 1 })}>${n.icons.map((x) => pic(x))}</span><span>${n.text}</span></li>`;
    });
  }

  private tiny() {
    const g = ["M3 6.500h7M5 4.500l-2 2 2 2M8 4.500l2 2-2 2", "M4 4h5v5H4z", "M3.500 5.500h4v4h-4zM5.500 5.500v-2h4v4h-2", "M4 4l5 5M9 4l-5 5"];
    const names = ["Dock", "Maximize", "Float", "Close"];
    return html`<div class="tiny">${g.map((d, i) => html`<button aria-label=${names[i]}><svg viewBox="0 0 13 13"><rect x=".5" y="1.500" width="12" height="10" rx="3" fill="#f3f0ed" stroke="#77716a"/><path d=${d} fill="none" stroke="#66605a" stroke-width=${i === 3 ? 2 : 1}/></svg></button>`)}</div>`;
  }

  private tri(dir: "u" | "d" | "l" | "r", fill = "#111") {
    const d = { u: "M0 7h9L4.500 2z", d: "M0 2h9L4.500 7z", l: "M7 0v9L2 4.500z", r: "M2 0v9l5-4.500z" }[dir];
    return html`<svg viewBox="0 0 9 9" aria-hidden="true"><path d=${d} fill=${fill}/></svg>`;
  }

  private objectBox(name: string, selected: boolean) {
    return html`<div class="frame"><div class="frame-col">
      <button class="head"><span>${name}</span><svg viewBox="0 0 9 6"><path d="M1 1l3.500 3L8 1" fill="none" stroke="#000" stroke-width="2.200"/></svg></button>
      <ul class="tree">${this.rows([{ text: "four_bit_Adder", icons: [selected ? "hiersel" : "hier"], level: 0, box: "+", selected }], false)}</ul>
    </div></div>`;
  }

  private schematic() {
    const seg = (c: string, w: number, x1: number, x2: number, y: number) => svg`<path d=${`M${x1} ${y}H${x2}`} stroke=${c} stroke-width=${w}/>`;
    const C = "#00ffff", G = "#00ff00", R = "#ff0000";
    const pin = (t: string, x: number, y: number, c: string) => svg`<text class="pin" x=${x} y=${y} fill=${c}>${t}</text>`;
    return html`<svg viewBox="383 122 1215 568" role="img" aria-label="RTL schematic">
      <rect x="553.5" y="149.5" width="873" height="514" fill="none" stroke="#808080"/>
      <rect x="648.5" y="244.5" width="684" height="324" fill="none" stroke=${C}/>
      <path d="M648 244h27l-27 27zM1333 244v27l-27-27zM648 569v-27l27 27zM1333 569h-27l27-27z" fill=${C}/>
      <rect x="888" y="339" width="203" height="204" fill="none" stroke=${G} stroke-width="2"/>
      ${[390, 441].map((y) => [seg(C, 4, 595, 650, y), seg(G, 4, 650, 700, y), seg(R, 2, 697, 838, y), seg(G, 2, 838, 888, y)])}
      ${seg(C, 1, 597, 649, 491.5)}${seg("#00e000", 1, 649, 698, 491.5)}${seg("#e00000", 1, 698, 838, 491.5)}${seg(G, 2, 836, 888, 491)}
      ${seg(G, 2, 1091, 1142, 390)}
      ${seg("#00e000", 1, 1280, 1332, 396.5)}${seg(C, 1, 1332, 1383, 396.5)}
      ${seg(G, 2, 1091, 1140, 491)}${seg(G, 4, 1278, 1329, 491)}${seg(R, 2, 1140, 1281, 491)}${seg(C, 4, 1329, 1384, 491)}
      <text class="big" x="826" y="228" fill=${C}>four_bit_Adder:1</text>
      <text class="big" x="820" y="323" fill=${G}>Full_Adder_basic</text>
      <text class="big" x="845" y="614" fill=${C}>four_bit_Adder</text>
      ${pin("x(3:0)", 574, 387, C)}${pin("y(3:0)", 574, 437, C)}${pin("z", 613, 488, C)}
      ${pin("a", 852, 387, G)}${pin("b", 852, 437, G)}${pin("c", 853, 488, G)}
      ${pin("cout", 1116, 387, G)}${pin("sum", 1116, 488, G)}${pin("c", 1356, 393, C)}${pin("s(3:0)", 1356, 488, C)}
    </svg><div class="tip">Block: four_bit_Adder<br>Type: four_bit_Adder:1</div>`;
  }

  private dockItem(icon: string, label: string, running = false, current = false) {
    return html`<button class=${classMap({ "dock-item": true, running, current, "dock-apps": icon === "apps" })} aria-label=${label}><svg viewBox="0 0 40 40">${dockIcons[icon]}</svg></button>`;
  }

  render() {
    const closeX = html`<svg class="ic" viewBox="0 0 16 16" aria-hidden="true"><path d="M3.500 3l9 11" stroke="#111" stroke-width="2.800" fill="none"/><path d="M13.500 2.500C10 6 6 10 3 14" stroke="#333" stroke-width="1.700" fill="none"/></svg>`;
    const bottomTabs = [["console", "Console"], ["err", "Errors"], ["warn", "Warnings"], ["find", "Find in Files Results"], ["grid", "View by Category"]];
    const docs = [["doc", "four_bit_Adder.vhd"], ["sigma", "Design Summary (Synthesized)"], ["rtl", "four_bit_Adder (RTL1)"]];
    return html`
      <svg class="defs" aria-hidden="true"><defs>
        <linearGradient id="paper" x2="1" y2="1"><stop stop-color="#fff"/><stop offset="1" stop-color="#bfdcf8"/></linearGradient>
        <linearGradient id="sky" x2="1" y2="1"><stop stop-color="#f2f9ff"/><stop offset="1" stop-color="#8cc0f0"/></linearGradient>
        <linearGradient id="amber" x2="0" y2="1"><stop stop-color="#fff2a0"/><stop offset="1" stop-color="#f8c010"/></linearGradient>
        <linearGradient id="leaf" x2="0" y2="1"><stop stop-color="#3ccf5c"/><stop offset="1" stop-color="#0d8a2c"/></linearGradient>
        <linearGradient id="green" x2="0" y2="1"><stop stop-color="#8ee05c"/><stop offset="1" stop-color="#3cb01c"/></linearGradient>
        <linearGradient id="steel" x2="0" y2="1"><stop stop-color="#8b8b8b"/><stop offset="1" stop-color="#bdbdbd"/></linearGradient>
        <linearGradient id="orange" x2="0" y2="1"><stop stop-color="#e8602c"/><stop offset="1" stop-color="#f8844c"/></linearGradient>
        <linearGradient id="bin" x2="0" y2="1"><stop stop-color="#a8a8a8"/><stop offset=".3" stop-color="#d6d6d6"/><stop offset="1" stop-color="#c4c4c4"/></linearGradient>
        <linearGradient id="fox" x2="0" y2="1"><stop stop-color="#ffb02a"/><stop offset=".5" stop-color="#ff6a2c"/><stop offset="1" stop-color="#e8207c"/></linearGradient>
        <linearGradient id="foxy" x2="0" y2="1"><stop stop-color="#fff040"/><stop offset="1" stop-color="#ff8a20"/></linearGradient>
        <radialGradient id="foxp"><stop stop-color="#6a5cf0"/><stop offset="1" stop-color="#8a2cc0"/></radialGradient>
      </defs></svg>
      <header class="topbar">
        <div class="top-left"><span>Activities</span><span class="top-app"><svg class="ic" viewBox="0 0 16 16"><path d="M0 1h9l7 7H6z" fill="#d2d2d2"/><path d="M0 15h9l7-7H6z" fill="#8e8e8e"/></svg>_pn</span></div>
        <div class="clock"><span>Mar 5</span><span>4:52 PM</span></div>
        <div class="top-icons">
          <svg class="ic" viewBox="0 0 16 16"><path d="M8 3v4M2.500 11V7h11v4" fill="none" stroke="#f2f2f2" stroke-width="1.300"/><path d="M5.500 0h5v4h-5zM0 9.500h5v4H0zM11 9.500h5v4h-5z" fill="#f2f2f2"/></svg>
          <svg class="ic" viewBox="0 0 16 16"><path d="M1 4.500h2.500L8 .5v13l-4.500-4H1z" fill="#f2f2f2"/><path d="M10 4.500q2 2.500 0 5" fill="none" stroke="#f2f2f2" stroke-width="1.300"/><path d="M12.500 2.500q3.500 4.500 0 9" fill="none" stroke="#777" stroke-width="1.300"/></svg>
          <svg class="ic" viewBox="0 0 16 16"><path d="M5 2.200a6 6 0 1 0 6 0M8 0v6.500" fill="none" stroke="#f2f2f2" stroke-width="1.300"/></svg>
        </div>
      </header>
      <nav class="dock" aria-label="Dock">
        ${this.dockItem("firefox", "Firefox", true)}${this.dockItem("files", "Files", true)}${this.dockItem("term", "Terminal", true)}
        ${this.dockItem("store", "Software")}${this.dockItem("help", "Help")}${this.dockItem("chrome", "Chrome")}${this.dockItem("gedit", "Text Editor")}
        <span class="dock-line"></span>
        ${this.dockItem("ise", "ISE", true, true)}${this.dockItem("trash", "Trash")}${this.dockItem("apps", "Show Applications")}
      </nav>
      <div class="window">
        <div class="titlebar">
          <h1>ISE Project Navigator (P.20131013) - /home/student/Desktop/13000122093/four_bit_adder/four_bit_adder.xise - [four_bit_Adder (RTL1)]</h1>
          <div class="win-btns">
            <button aria-label="Minimize"><svg viewBox="0 0 12 12"><path d="M2 8.500h8" stroke="#fff"/></svg></button>
            <button aria-label="Restore"><svg viewBox="0 0 12 12"><path d="M2.500 4.500h5v5h-5z" fill="none" stroke="#fff"/><path d="M4.500 2.500h5v5" fill="none" stroke="#aaa"/></svg></button>
            <button aria-label="Close"><svg viewBox="0 0 12 12"><path d="M2 2l8 8M10 2l-8 8" stroke="#fff" stroke-width="1.300"/></svg></button>
          </div>
        </div>
        <nav class="menubar">${pic("rtl")}
          ${menus.map(([a, u, c]) => html`<button>${a}<u>${u}</u>${c}</button>`)}
          <div class="mdi">${[["Minimize child", "M3.500 6.500h6"], ["Restore child", "M3.500 6h3.500v3.500H3.500zM5.500 6V3.500H9V7H7"], ["Close child", "M4 4l5 5M9 4l-5 5"]].map(([n, d], i) => html`<button aria-label=${n}><svg viewBox="0 0 13 13"><rect x="1.500" y="1.500" width="10" height="10" rx="2" fill="none" stroke="#77716a"/><path d=${d} fill="none" stroke="#5f5953" stroke-width=${i === 1 ? 1 : 2}/></svg></button>`)}</div>
        </nav>
        <div class="toolbar">${mainBar.map((g) => html`<div class="group"><span class="grip"></span>${this.buttons(g.items)}${g.more ? html`<button class="more" aria-label="More tools">»</button>` : nothing}</div>`)}</div>
        <main class="main">
          <section class="left">
            <div class="panel-title"><h2>Design</h2>${this.tiny()}</div>
            <div class="pane upper">
              <div class="vbar">${this.buttons(designBar)}</div>
              <div class="pane-body">
                <div class="view-row"><span>View</span><fieldset>
                  <label class="impl" for="impl"><input id="impl" type="radio" name="view" checked>${pic("impl")}<span>Implementation</span></label>
                  <label class="simu" for="simu"><input id="simu" type="radio" name="view">${pic("simul")}<span>Simulation</span></label></fieldset></div>
                <div class="frame"><div class="frame-col">
                  <div class="head plain"><span>Hierarchy</span></div>
                  <ul class="tree">${this.rows(sources, false)}</ul>
                  <div class="hscroll"><button aria-label="Scroll left">${this.tri("l")}</button><span class="thumb"></span><span class="track-end"></span><button aria-label="Scroll right">${this.tri("r")}</button></div>
                </div></div>
              </div>
            </div>
            <div class="hsplit"></div>
            <div class="pane lower">
              <div class="vbar">${this.buttons(processBar)}</div>
              <div class="pane-body">
                <div class="status-row">${pic("cycle")}<span>No Processes Running</span></div>
                <div class="frame"><div class="frame-col">
                  <div class="head tight"><span>Processes: four_bit_Adder - Behavioral</span></div>
                  <ul class="tree">${this.rows(processes, true)}</ul></div>
                  <div class="vscroll"><button aria-label="Scroll up">${this.tri("u")}</button><span class="thumb" style="flex:0 0 75%"></span><span class="track-end"></span><button aria-label="Scroll down">${this.tri("d")}</button></div>
                </div>
              </div>
            </div>
            <div class="tabs left-tabs">
              <button class="tab">${pic("start")}Start</button><button class="tab active">${pic("design")}Design</button><button class="tab">${pic("files")}Files</button><button class="tab cut" aria-label="Libraries">${pic("libs")}</button>
              <button class="arrow" aria-label="Previous tab">${this.tri("l", "#aaa49d")}</button><button class="arrow" aria-label="Next tab">${this.tri("r")}</button>
            </div>
          </section>
          <div class="vsplit"></div>
          <section class="right">
            <div class="work"><div class="vbar">${this.buttons(schematicBar)}</div><div class="sheet">${this.schematic()}</div></div>
            <div class="tabs">${docs.map(([i, t], n) => html`<button class=${classMap({ tab: true, "doc-tab": true, active: n === 2 })}>${pic(i)}<span>${t}</span>${closeX}</button>`)}</div>
          </section>
        </main>
        <div class="hsplit"></div>
        <div class="panel-title"><h2>View by Category</h2>${this.tiny()}</div>
        <section class="bottom">
          <div class="side"><h3>Design Objects of Top Level Block</h3>
            <div class="trio">${this.objectBox("Instances", true)}${this.objectBox("Pins", false)}${this.objectBox("Signals", false)}</div></div>
          <div class="vsplit"></div>
          <div class="side"><h3>Properties of Instance: four_bit_Adder</h3>
            <div class="frame"><div class="table-box"><table>
              <thead><tr><th scope="col"><div class="head"><span>Name</span><svg viewBox="0 0 9 6"><path d="M1 5l3.500-3L8 5" fill="none" stroke="#000" stroke-width="2.200"/></svg></div></th><th scope="col"><div class="head"><span>Value</span></div></th></tr></thead>
              <tbody><tr><td>Type</td><td>four_bit_Adder:1</td></tr><tr><td>Part</td><td>xc3s50-5-pq208</td></tr><tr><td>OriginalSymbol</td><td>four_bit_Adder</td></tr></tbody>
            </table></div>
              <div class="vscroll"><button aria-label="Scroll up">${this.tri("u")}</button><span class="thumb" style="flex:0 0 38%"></span><span class="track-end"></span><button aria-label="Scroll down">${this.tri("d")}</button></div></div></div>
        </section>
        <div class="tabs" role="tablist">${bottomTabs.map(([i, t]) => html`<button role="tab" class=${classMap({ tab: true, active: this.bottomTab === t })} @click=${() => (this.bottomTab = t)}>${pic(i)}${t}</button>`)}</div>
        <footer class="statusbar">[780,216]</footer>
      </div>`;
  }
}
